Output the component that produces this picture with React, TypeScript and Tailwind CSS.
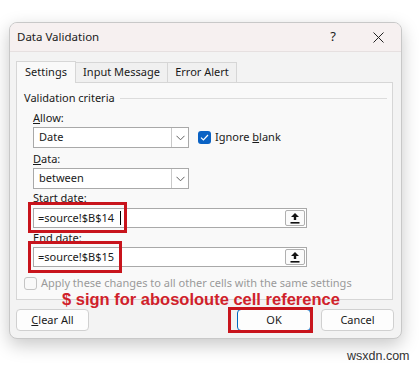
import React from "react";

const font = { fontFamily: '"Noto Sans", "Open Sans", sans-serif' };

function Chevron() {
  return (
    <svg width="9" height="6" viewBox="0 0 9 6" fill="none">
      <path d="M0.5 0.8 L4.5 4.8 L8.5 0.8" stroke="#606060" strokeWidth="1" />
    </svg>
  );
}

function Select({ value }: { value: string }) {
  return (
    <div className="flex h-[21px] w-[156px] items-stretch border border-[#a9a9a9] bg-white">
      <div className="flex flex-1 items-center pl-[5px] text-[11px] text-[#1a1a1a]">{value}</div>
      <div className="flex w-[17px] items-center justify-center border-l border-[#c9c9c9]">
        <Chevron />
      </div>
    </div>
  );
}

function UploadIcon() {
  return (
    <svg width="10" height="12" viewBox="0 0 10 12">
      <path d="M5 1 L9 5 L6.2 5 L6.2 8 L3.8 8 L3.8 5 L1 5 Z" fill="#111" />
      <rect x="0.5" y="10" width="9" height="1.6" fill="#111" />
    </svg>
  );
}

function RefInput({ value, cursor }: { value: string; cursor?: boolean }) {
  return (
    <div className="flex h-[20px] w-[274px] items-stretch border border-[#a9a9a9] bg-white">
      <div className="flex flex-1 items-center pl-[4px] text-[11px] text-[#1a1a1a]">
        <span>{value}</span>
        {cursor && <span className="ml-[6px] inline-block h-[14px] w-px bg-black" />}
      </div>
      <div className="my-[1px] mr-[1px] flex w-[20px] items-center justify-center rounded-[2px] border border-[#b0b0b0] bg-[#fbfbfb]">
        <UploadIcon />
      </div>
    </div>
  );
}

export default function App() {
  return (
    <div className="relative h-[366px] w-[419px] overflow-hidden bg-white pl-[9px] pt-[22px]" style={font}>
      <div className="flex h-[317px] w-[393px] flex-col overflow-hidden rounded-[8px] border border-[#c8c8c8] bg-[#f3f3f3] shadow-[0_6px_18px_rgba(0,0,0,0.22)]">
        {/* title bar */}
        <div className="flex h-[29px] items-center border-b border-[#e6e0e0] bg-[#f6f0f0] pl-[7px]">
          <div className="flex-1 text-[11.5px] text-[#1a1a1a]">Data Validation</div>
          <div className="mr-[37px] text-[13px] text-[#1a1a1a]">?</div>
          <div className="mr-[17px]">
            <svg width="11" height="11" viewBox="0 0 11 11">
              <path d="M0.5 0.5 L10.5 10.5 M10.5 0.5 L0.5 10.5" stroke="#222" strokeWidth="1" />
            </svg>
          </div>
        </div>

        {/* body */}
        <div className="flex flex-col pl-[6px] pt-[8px]">
          {/* tabs */}
          <div className="flex h-[22px] items-end">
            <div className="relative z-10 -mb-px flex h-[22px] w-[60px] items-center justify-center border border-b-0 border-[#d6d6d6] bg-[#f9f9f9] text-[11px] text-[#1a1a1a]">
              Settings
            </div>
            <div className="flex h-[20px] w-[92px] items-center justify-center border border-b-0 border-l-0 border-[#d6d6d6] bg-[#f0f0f0] text-[11px] text-[#1a1a1a]">
              Input Message
            </div>
            <div className="flex h-[20px] w-[69px] items-center justify-center border border-b-0 border-l-0 border-[#d6d6d6] bg-[#f0f0f0] text-[11px] text-[#1a1a1a]">
              Error Alert
            </div>
          </div>

          {/* panel */}
          <div className="flex h-[218px] w-[377px] flex-col border border-[#d6d6d6] bg-[#f9f9f9] pt-[7px]">
            <div className="flex h-[16px] items-center pl-[7px] pr-[5px]">
              <span className="text-[11px] text-[#1a1a1a]">Validation criteria</span>
              <div className="ml-[5px] h-px flex-1 bg-[#dcdcdc]" />
            </div>

            <div className="flex flex-col pl-[16px]">
              <div className="mt-[4px] flex h-[16px] items-center text-[11px] text-[#1a1a1a]">
                <span><span className="underline">A</span>llow:</span>
              </div>
              <div className="mt-px flex items-center">
                <Select value="Date" />
                <div className="ml-[9px] flex h-[13px] w-[13px] items-center justify-center rounded-[3px] bg-[#0a62c4]">
                  <svg width="9" height="7" viewBox="0 0 9 7">
                    <path d="M1 3.6 L3.4 6 L8 1" stroke="white" strokeWidth="1.2" fill="none" />
                  </svg>
                </div>
                <span className="ml-[4px] text-[11px] text-[#1a1a1a]">
                  Ignore <span className="underline">b</span>lank
                </span>
              </div>

              <div className="mt-[3px] flex h-[16px] items-center text-[11px] text-[#1a1a1a]">
                <span><span className="underline">D</span>ata:</span>
              </div>
              <div className="mt-px">
                <Select value="between" />
              </div>

              <div className="mt-px flex h-[16px] items-center text-[11px] text-[#1a1a1a]">
                <span><span className="underline">S</span>tart date:</span>
              </div>
              <div className="mt-[2px]">
                <RefInput value="=source!$B$14" cursor />
              </div>

              <div className="mt-[2px] flex h-[16px] items-center text-[11px] text-[#1a1a1a]">
                <span><span className="underline">E</span>nd date:</span>
              </div>
              <div className="mt-px">
                <RefInput value="=source!$B$15" />
              </div>
            </div>

            <div className="mt-[9px] flex items-center pl-[7px]">
              <div className="h-[13px] w-[13px] rounded-[3px] border border-[#c4c4c4] bg-[#f9f9f9]" />
              <span className="ml-[4px] text-[11px] leading-[14px] text-[#9a9a9a]">
                Apply these changes to all other cells with the same settings
              </span>
            </div>
          </div>

          {/* buttons */}
          <div className="mt-[9px] flex items-center">
            <div className="flex h-[22px] w-[73px] items-center justify-center rounded-[4px] border border-[#d0d0d0] bg-[#fdfdfd] text-[11px] text-[#1a1a1a]">
              <span><span className="underline">C</span>lear All</span>
            </div>
            <div className="ml-[148px] flex h-[22px] w-[74px] items-center justify-center rounded-[4px] border border-[#0067c0] bg-[#fdfdfd] text-[11px] text-[#1a1a1a]">
              OK
            </div>
            <div className="ml-[10px] flex h-[22px] w-[73px] items-center justify-center rounded-[4px] border border-[#d0d0d0] bg-[#fdfdfd] text-[11px] text-[#1a1a1a]">
              Cancel
            </div>
          </div>
        </div>
      </div>

      {/* annotations */}
      <div className="absolute left-[28px] top-[202px] h-[31px] w-[99px] border-[3px] border-[#c8141c]" />
      <div className="absolute left-[28px] top-[241px] h-[32px] w-[94px] border-[3px] border-[#c8141c]" />
      <div className="absolute left-[228px] top-[307px] h-[26px] w-[85px] border-[3px] border-[#c8141c]" />
      <div
        className="absolute left-[62px] top-[290px] text-[16.5px] font-bold leading-[19px] text-[#d0212a]"
        style={{ fontFamily: '"Liberation Sans", Arial, sans-serif' }}
      >
        $ sign for abosoloute cell reference
      </div>
      <div
        className="absolute left-[347px] top-[348px] text-[12.5px] leading-[16px] text-[#333]"
        style={{ fontFamily: '"Liberation Sans", Arial, sans-serif' }}
      >
        wsxdn.com
      </div>
    </div>
  );
}
